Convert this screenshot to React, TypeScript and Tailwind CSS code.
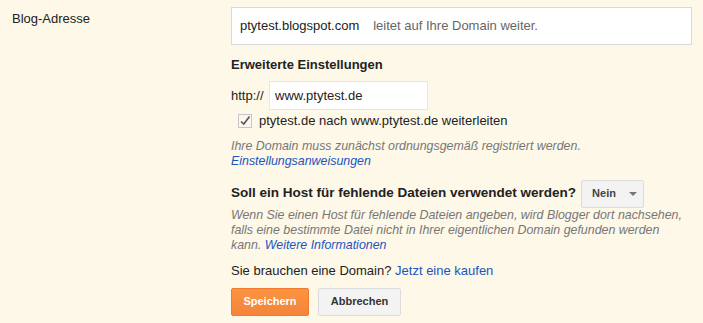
export default function App() {
    return (
        <div
            className="w-[703px] h-[323px] bg-[#fef8e8] text-[13px] text-[#222] flex"
            style={{ fontFamily: "Arial, 'Liberation Sans', sans-serif" }}
        >
            <div className="w-[231px] pl-[12px] pt-[11px] leading-[16px]">Blog-Adresse</div>

            <div className="flex-1 pt-[7px]">
                <div className="w-[461px] h-[38px] bg-white border border-[#d9d9d9] flex items-center pl-[8px]">
                    <span>ptytest.blogspot.com</span>
                    <span className="ml-[14px] text-[#666]">leitet auf Ihre Domain weiter.</span>
                </div>

                <div className="font-bold mt-[12px] leading-[16px]">Erweiterte Einstellungen</div>

                <div className="flex items-center mt-[8px]">
                    <span className="w-[38px]">http://</span>
                    <div className="w-[159px] h-[29px] bg-white border border-[#e6e6e6] flex items-center pl-[5px]">
                        www.ptytest.de
                    </div>
                </div>

                <div className="flex items-center mt-[1px] pl-[7px]">
                    <span className="w-[14px] h-[14px] border border-[#c6c6c6] bg-[#fbf7ee] flex items-center justify-center">
                        <svg width="12" height="12" viewBox="0 0 12 12">
                            <path d="M2 6.5 L4.8 9 L10.5 1.5" fill="none" stroke="#555" strokeWidth="1.6" />
                        </svg>
                    </span>
                    <span className="ml-[7px]">ptytest.de nach www.ptytest.de weiterleiten</span>
                </div>

                <div className="mt-[8px] text-[12.4px] italic text-[#777] leading-[15px]">
                    Ihre Domain muss zunächst ordnungsgemäß registriert werden.
                    <br />
                    <span className="text-[#1a55c0]">Einstellungsanweisungen</span>
                </div>

                <div className="flex items-center mt-[11px]">
                    <span className="font-bold text-[13.5px]">Soll ein Host für fehlende Dateien verwendet werden?</span>
                    <div className="ml-[5px] w-[63px] h-[28px] rounded-[2px] border border-[#dcdcdc] bg-[#f3f3f3] flex items-center pl-[10px] text-[11px] font-bold text-[#444]">
                        Nein
                        <span className="ml-[13px] w-0 h-0 border-l-[4px] border-r-[4px] border-t-[4px] border-l-transparent border-r-transparent border-t-[#777]" />
                    </div>
                </div>

                <div className="text-[12.4px] italic text-[#777] leading-[15px] w-[452px]">
                    Wenn Sie einen Host für fehlende Dateien angeben, wird Blogger dort nachsehen, falls eine bestimmte Datei nicht in Ihrer eigentlichen Domain gefunden werden kann.{" "}
                    <span className="text-[#1a55c0]">Weitere Informationen</span>
                </div>

                <div className="mt-[10px] leading-[16px]">
                    Sie brauchen eine Domain? <span className="text-[#1a55c0]">Jetzt eine kaufen</span>
                </div>

                <div className="flex gap-[9px] mt-[9px]">
                    <button className="w-[78px] h-[28px] rounded-[2px] border border-[#f07a2e] bg-gradient-to-b from-[#fc9441] to-[#f4843a] text-white text-[11px] font-bold">
                        Speichern
                    </button>
                    <button className="w-[83px] h-[28px] rounded-[2px] border border-[#dcdcdc] bg-[#f3f3f3] text-[#333] text-[11px] font-bold">
                        Abbrechen
                    </button>
                </div>
            </div>
        </div>
    );
}
